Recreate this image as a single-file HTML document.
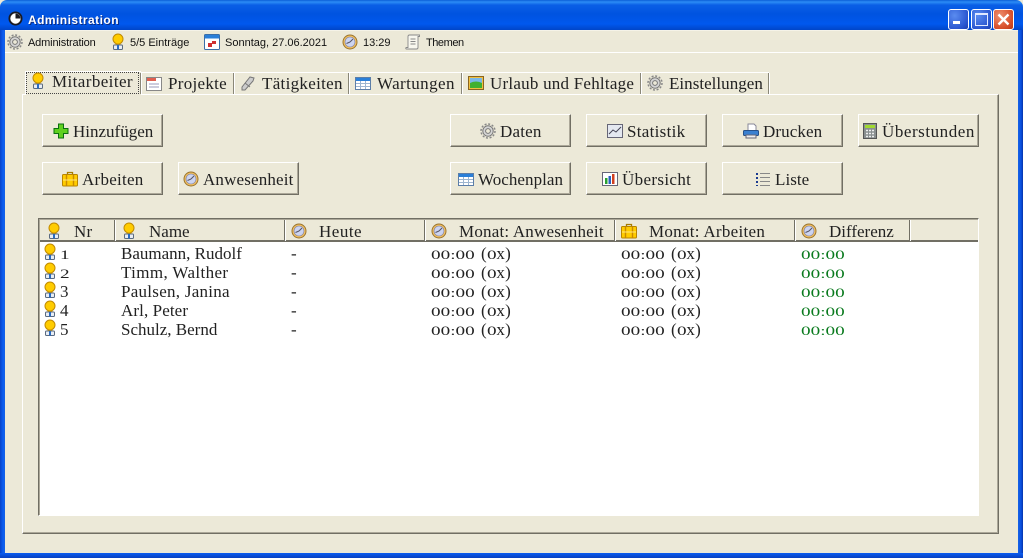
<!DOCTYPE html>
<html><head><meta charset="utf-8"><style>
html,body{margin:0;padding:0;background:#fff}
#w{position:relative;width:1023px;height:558px;overflow:hidden;background:#ece9d8;font-family:"Liberation Serif",serif;color:#111}
#w *{box-sizing:border-box}
.a{position:absolute;white-space:nowrap}
svg.i{position:absolute;width:16px;height:16px;overflow:visible}
.s{font:11px/14px "Liberation Sans",sans-serif;color:#111}
.t{font-size:17px;line-height:20px;letter-spacing:.2px;color:#222}
.b{position:absolute;width:121px;height:33px;background:#ece9d8;border:1px solid;border-color:#fff #716f64 #716f64 #fff;box-shadow:inset -1px -1px 0 #aca899}
.l{font-size:17px;line-height:20px;letter-spacing:.2px;color:#222;position:absolute;white-space:nowrap}
.sep{position:absolute;top:73px;width:2px;height:21px;border-left:1px solid #8a8778;border-right:1px solid #fff}
.d{position:absolute;top:220px;width:2px;height:21px;border-left:1px solid #716f64;border-right:1px solid #fff}
.o{display:inline-block;transform:scale(1.28,.86);transform-origin:0 70%;font-size:15px;letter-spacing:0}
.z{margin-right:2px}
.g{color:#0a7a1e}
</style></head><body><div id="w">
<svg width="0" height="0" style="position:absolute"><defs>
<g id="p"><circle cx="8" cy="5" r="5" fill="#fc0" stroke="#c08a00"/><rect x="5.500" y="9.500" width="5" height="1.500" fill="#d89c00"/><rect x="3.500" y="11" width="9" height="4.500" rx="1" fill="#e8eef6" stroke="#5a6a80"/><rect x="7" y="11" width="2" height="4.500" fill="#2a6bc0"/></g>
<g id="c"><circle cx="8" cy="8" r="7" fill="#f0c060" stroke="#9a7430"/><circle cx="8" cy="8" r="5" fill="#ccd4f0" stroke="#7a7aa0" stroke-width=".6"/><path d="M8 8L4.500 9.500M8 8l3-3" stroke="#556" stroke-width="1" fill="none"/></g>
<g id="g"><circle cx="8" cy="8" r="5.200" fill="#d4d4d4" stroke="#777"/><circle cx="8" cy="8" r="7" fill="none" stroke="#888" stroke-width="1.500" stroke-dasharray="2 1.660"/><circle cx="8" cy="8" r="2.400" fill="#ece9d8" stroke="#777"/></g>
<g id="k"><path d="M5.500 3V1.500h5V3" fill="none" stroke="#a67c00" stroke-width="1.300"/><rect x=".5" y="3.500" width="15" height="11.500" rx="1" fill="#fc0" stroke="#b98500"/><path d="M4.500 4v11M11.500 4v11" stroke="#c98a00" stroke-width="1.400"/><path d="M1 9h14" stroke="#ffe680"/></g>
<g id="t"><rect x=".5" y="2.500" width="15" height="12" fill="#fff" stroke="#5c7ea8"/><rect x="1" y="3" width="14" height="3" fill="#2a7fd8"/><path d="M1 8.500h14M1 11.500h14M5.500 6v8M10.500 6v8" stroke="#9db5d0"/></g>
</defs></svg>
<!-- window frame -->
<div class="a" style="left:0;top:0;width:1023px;height:30px;border-radius:7px 7px 0 0;background:linear-gradient(#0a5fd8 0,#2c8cf6 2px,#0a5fe6 5px,#0053e0 14px,#0058ee 24px,#0045c8 30px)"></div>
<div class="a" style="left:0;top:30px;width:5px;height:528px;background:linear-gradient(90deg,#0842c8,#0a5cf0 3px,#1662e6)"></div>
<div class="a" style="left:1018px;top:30px;width:5px;height:528px;background:linear-gradient(90deg,#1662e6,#0a50e0 3px,#0633a8)"></div>
<div class="a" style="left:0;top:553px;width:1023px;height:5px;background:linear-gradient(#0a5cf0,#0840c0)"></div>
<svg class="i" style="left:8px;top:11px;width:15px;height:15px"><circle cx="7.500" cy="7.500" r="7" fill="#1a1a22"/><circle cx="7.500" cy="7.500" r="5.200" fill="#fff"/><path d="M7.500 7.500V2.500A5 5 0 0 1 12.500 7.500z" fill="#1a1a22"/></svg>
<div class="a" style="left:28px;top:13px;font:bold 12px/14px 'Liberation Sans',sans-serif;letter-spacing:.45px;color:#fff;text-shadow:1px 1px 0 #0a2a80">Administration</div>
<!-- window buttons -->
<div class="a" style="left:948px;top:9px;width:21px;height:21px;border:1px solid #fff;border-radius:3px;background:radial-gradient(circle at 30% 30%,#5a8cf0,#2a56d0 70%,#1c3fb0)"></div>
<div class="a" style="left:953px;top:21px;width:7px;height:3px;background:#fff"></div>
<div class="a" style="left:971px;top:9px;width:21px;height:21px;border:1px solid #fff;border-radius:3px;background:radial-gradient(circle at 30% 30%,#5a8cf0,#2a56d0 70%,#1c3fb0)"></div>
<div class="a" style="left:975px;top:13px;width:13px;height:13px;border:1px solid #dfe8ff;border-top-width:2px"></div>
<div class="a" style="left:993px;top:9px;width:21px;height:21px;border:1px solid #fff;border-radius:3px;background:radial-gradient(circle at 30% 30%,#ee9070,#d8502c 65%,#b83818)"></div>
<svg class="i" style="left:996px;top:12px"><path d="M2.500 2.500l10 10M12.500 2.500l-10 10" stroke="#fff" stroke-width="2.400"/></svg>
<!-- status row -->
<div class="a" style="left:5px;top:30px;width:1013px;height:1px;background:#f5f3e8"></div>
<div class="a" style="left:5px;top:52px;width:1013px;height:1px;background:#fff"></div>
<svg class="i" style="left:7px;top:34px"><use href="#g"/></svg><div class="a s" style="left:28px;top:36px;letter-spacing:-.15px">Administration</div>
<svg class="i" style="left:110px;top:34px"><use href="#p"/></svg><div class="a s" style="left:130px;top:36px">5/5 Einträge</div>
<svg class="i" style="left:204px;top:34px"><rect x=".5" y=".5" width="15" height="15" rx="1" fill="#fff" stroke="#3a6ea8"/><rect x="1" y="1" width="14" height="3.500" fill="#2a7fd8"/><path d="M4 9h4V7h4v3H8v3H4z" fill="#d03030"/></svg><div class="a s" style="left:225px;top:36px">Sonntag, 27.06.2021</div>
<svg class="i" style="left:342px;top:34px"><use href="#c"/></svg><div class="a s" style="left:363px;top:36px">13:29</div>
<svg class="i" style="left:405px;top:34px"><path d="M4.500 1h10v1.500l-1.500 0v11c0 1-.5 1.500-1.500 1.500H1.500c-1 0-1-1.500 0-1.500H3V2.500C3 1.500 3.500 1 4.500 1zM5.500 5h5M5.500 7.500h5M5.500 10h5" fill="#f8f7ee" stroke="#888" stroke-width=".9"/></svg><div class="a s" style="left:426px;top:36px;letter-spacing:-.45px">Themen</div>
<!-- panel -->
<div class="a" style="left:22px;top:94px;width:977px;height:440px;border:1px solid;border-color:#fff #716f64 #716f64 #fff;box-shadow:inset -1px -1px 0 #aca899"></div>
<!-- tabs -->
<div class="a" style="left:25px;top:71px;width:116px;height:24px;background:#ece9d8;border-top:1px solid #fff;border-left:1px solid #fff"></div>
<div class="a" style="left:26px;top:72px;width:113px;height:22px;border:1px dotted #444"></div>
<div class="a" style="left:141px;top:72px;width:628px;height:1px;background:#fff"></div>
<div class="sep" style="left:140px"></div><div class="sep" style="left:233px"></div><div class="sep" style="left:348px"></div><div class="sep" style="left:461px"></div><div class="sep" style="left:640px"></div><div class="sep" style="left:768px"></div>
<svg class="i" style="left:30px;top:73px"><use href="#p"/></svg><div class="a t" style="left:52px;top:72px;letter-spacing:.41px">Mitarbeiter</div>
<svg class="i" style="left:146px;top:76px"><rect x=".5" y="1.500" width="15" height="13" fill="#fff" stroke="#888"/><path d="M1 2h9v3H1z" fill="#e06050"/><path d="M3 8h10M3 11h10" stroke="#99b"/></svg><div class="a t" style="left:168px;top:74px;letter-spacing:.29px">Projekte</div>
<svg class="i" style="left:240px;top:75px"><path d="M2 12L10 2l4 1-1 3-8 9-3 0zM5 8l5 4" fill="#ccc" stroke="#777"/></svg><div class="a t" style="left:262px;top:74px;letter-spacing:.31px">Tätigkeiten</div>
<svg class="i" style="left:355px;top:75px"><use href="#t"/></svg><div class="a t" style="left:377px;top:74px;letter-spacing:.41px">Wartungen</div>
<svg class="i" style="left:468px;top:75px"><rect x=".5" y="1.500" width="15" height="13" fill="#f0c040" stroke="#8a6420"/><rect x="2" y="3" width="12" height="5" fill="#7ab8e8"/><path d="M2 8q6-3 12 0v5H2z" fill="#40b030"/></svg><div class="a t" style="left:490px;top:74px;letter-spacing:.23px">Urlaub und Fehltage</div>
<svg class="i" style="left:647px;top:75px"><use href="#g"/></svg><div class="a t" style="left:669px;top:74px;letter-spacing:.03px">Einstellungen</div>
<!-- buttons -->
<div class="b" style="left:42px;top:114px"></div><div class="b" style="left:42px;top:162px"></div><div class="b" style="left:178px;top:162px"></div>
<div class="b" style="left:450px;top:114px"></div><div class="b" style="left:586px;top:114px"></div><div class="b" style="left:722px;top:114px"></div><div class="b" style="left:858px;top:114px"></div>
<div class="b" style="left:450px;top:162px"></div><div class="b" style="left:586px;top:162px"></div><div class="b" style="left:722px;top:162px"></div>
<svg class="i" style="left:53px;top:123px"><path d="M5.500 1h5v4.500H15v5h-4.500V15h-5v-4.500H1v-5h4.500z" fill="#5fd020" stroke="#0a7010"/></svg><div class="l" style="left:73px;top:122px;letter-spacing:0">Hinzufügen</div>
<svg class="i" style="left:62px;top:171px"><use href="#k"/></svg><div class="l" style="left:82px;top:170px;letter-spacing:.26px">Arbeiten</div>
<svg class="i" style="left:183px;top:171px"><use href="#c"/></svg><div class="l" style="left:203px;top:170px;letter-spacing:.16px">Anwesenheit</div>
<svg class="i" style="left:480px;top:123px"><use href="#g"/></svg><div class="l" style="left:500px;top:122px">Daten</div>
<svg class="i" style="left:607px;top:123px"><rect x=".5" y="1.500" width="15" height="13" fill="#e4e8f0" stroke="#667"/><path d="M2 11l4-4 3 2 5-5" stroke="#445" fill="none"/></svg><div class="l" style="left:627px;top:122px;letter-spacing:.3px">Statistik</div>
<svg class="i" style="left:743px;top:123px"><path d="M5 1h6l2 2v5H5z" fill="#fff" stroke="#889"/><rect x=".5" y="7.500" width="15" height="5" rx="1" fill="#3a80d0" stroke="#25508a"/><rect x="3" y="12" width="10" height="3" fill="#eee" stroke="#667"/></svg><div class="l" style="left:763px;top:122px;letter-spacing:.1px">Drucken</div>
<svg class="i" style="left:863px;top:123px"><rect x=".5" y=".5" width="13" height="15" fill="#8a9090" stroke="#555"/><rect x="2" y="2" width="10" height="3" fill="#a0d830"/><path d="M3 7.500h8M3 10.500h8M3 13.500h8" stroke="#eee" stroke-width="1.500" stroke-dasharray="2 1"/></svg><div class="l" style="left:882px;top:122px;letter-spacing:.55px">Überstunden</div>
<svg class="i" style="left:458px;top:171px"><use href="#t"/></svg><div class="l" style="left:478px;top:170px;letter-spacing:.05px">Wochenplan</div>
<svg class="i" style="left:602px;top:171px"><rect x=".5" y="1.500" width="15" height="13" fill="#fff" stroke="#667"/><rect x="3" y="7" width="2.500" height="6" fill="#2aa030"/><rect x="6.500" y="5" width="2.500" height="8" fill="#2a60c0"/><rect x="10" y="3" width="2.500" height="10" fill="#d04020"/></svg><div class="l" style="left:622px;top:170px;letter-spacing:.35px">Übersicht</div>
<svg class="i" style="left:755px;top:171px"><path d="M2 2v2M2 6v2M2 10v2M2 14v1" stroke="#1a3a90" stroke-width="2"/><path d="M5 2.500h10M5 6.500h10M5 10.500h10M5 14.500h10" stroke="#888"/></svg><div class="l" style="left:775px;top:170px;letter-spacing:.06px">Liste</div>
<!-- table -->
<div class="a" style="left:38px;top:218px;width:941px;height:298px;background:#fff;border:1px solid;border-color:#716f64 #fff #fff #716f64;box-shadow:inset 1px 1px 0 #aca899"></div>
<div class="a" style="left:40px;top:220px;width:938px;height:22px;background:#ece9d8;border-bottom:2px solid #716f64"></div>
<div class="d" style="left:114px"></div><div class="d" style="left:284px"></div><div class="d" style="left:424px"></div><div class="d" style="left:614px"></div><div class="d" style="left:794px"></div><div class="d" style="left:909px"></div>
<svg class="i" style="left:46px;top:223px"><use href="#p"/></svg><div class="l" style="left:74px;top:222px">Nr</div>
<svg class="i" style="left:121px;top:223px"><use href="#p"/></svg><div class="l" style="left:149px;top:222px;letter-spacing:0">Name</div>
<svg class="i" style="left:291px;top:223px"><use href="#c"/></svg><div class="l" style="left:319px;top:222px;letter-spacing:.5px">Heute</div>
<svg class="i" style="left:431px;top:223px"><use href="#c"/></svg><div class="l" style="left:459px;top:222px">Monat: Anwesenheit</div>
<svg class="i" style="left:621px;top:223px"><use href="#k"/></svg><div class="l" style="left:649px;top:222px;letter-spacing:.28px">Monat: Arbeiten</div>
<svg class="i" style="left:801px;top:223px"><use href="#c"/></svg><div class="l" style="left:829px;top:222px;letter-spacing:0">Differenz</div>
<!-- rows -->
<svg class="i" style="left:42px;top:244px"><use href="#p"/></svg><div class="l" style="left:60px;top:244px"><span class="o">1</span></div><div class="l" style="left:121px;top:244px;letter-spacing:0">Baumann, Rudolf</div><div class="l" style="left:291px;top:244px">-</div><div class="l" style="left:431px;top:244px"><span class="o">00:00</span></div><div class="l" style="left:481px;top:244px">(<span class="o z">0</span>x)</div><div class="l" style="left:621px;top:244px"><span class="o">00:00</span></div><div class="l" style="left:671px;top:244px">(<span class="o z">0</span>x)</div><div class="l g" style="left:801px;top:244px"><span class="o">00:00</span></div>
<svg class="i" style="left:42px;top:263px"><use href="#p"/></svg><div class="l" style="left:60px;top:263px"><span class="o">2</span></div><div class="l" style="left:121px;top:263px;letter-spacing:.38px">Timm, Walther</div><div class="l" style="left:291px;top:263px">-</div><div class="l" style="left:431px;top:263px"><span class="o">00:00</span></div><div class="l" style="left:481px;top:263px">(<span class="o z">0</span>x)</div><div class="l" style="left:621px;top:263px"><span class="o">00:00</span></div><div class="l" style="left:671px;top:263px">(<span class="o z">0</span>x)</div><div class="l g" style="left:801px;top:263px"><span class="o">00:00</span></div>
<svg class="i" style="left:42px;top:282px"><use href="#p"/></svg><div class="l" style="left:60px;top:282px">3</div><div class="l" style="left:121px;top:282px;letter-spacing:.27px">Paulsen, Janina</div><div class="l" style="left:291px;top:282px">-</div><div class="l" style="left:431px;top:282px"><span class="o">00:00</span></div><div class="l" style="left:481px;top:282px">(<span class="o z">0</span>x)</div><div class="l" style="left:621px;top:282px"><span class="o">00:00</span></div><div class="l" style="left:671px;top:282px">(<span class="o z">0</span>x)</div><div class="l g" style="left:801px;top:282px"><span class="o">00:00</span></div>
<svg class="i" style="left:42px;top:301px"><use href="#p"/></svg><div class="l" style="left:60px;top:301px">4</div><div class="l" style="left:121px;top:301px;letter-spacing:.1px">Arl, Peter</div><div class="l" style="left:291px;top:301px">-</div><div class="l" style="left:431px;top:301px"><span class="o">00:00</span></div><div class="l" style="left:481px;top:301px">(<span class="o z">0</span>x)</div><div class="l" style="left:621px;top:301px"><span class="o">00:00</span></div><div class="l" style="left:671px;top:301px">(<span class="o z">0</span>x)</div><div class="l g" style="left:801px;top:301px"><span class="o">00:00</span></div>
<svg class="i" style="left:42px;top:320px"><use href="#p"/></svg><div class="l" style="left:60px;top:320px">5</div><div class="l" style="left:121px;top:320px;letter-spacing:0">Schulz, Bernd</div><div class="l" style="left:291px;top:320px">-</div><div class="l" style="left:431px;top:320px"><span class="o">00:00</span></div><div class="l" style="left:481px;top:320px">(<span class="o z">0</span>x)</div><div class="l" style="left:621px;top:320px"><span class="o">00:00</span></div><div class="l" style="left:671px;top:320px">(<span class="o z">0</span>x)</div><div class="l g" style="left:801px;top:320px"><span class="o">00:00</span></div>
</div></body></html>
